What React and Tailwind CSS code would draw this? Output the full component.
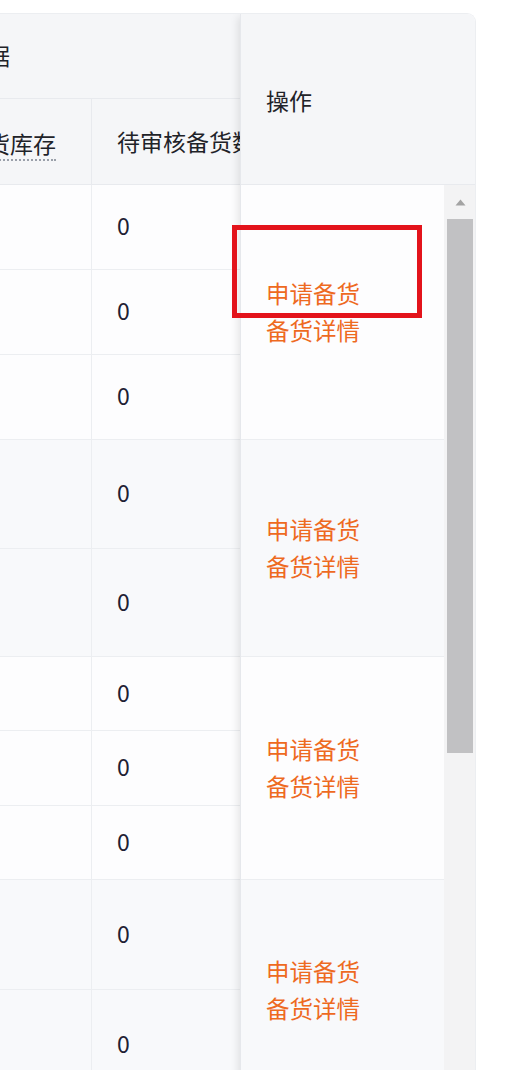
import React from "react";

const rows = [
  { h: 85, g: 0 }, { h: 85, g: 0 }, { h: 85, g: 0 },
  { h: 109, g: 1 }, { h: 108, g: 1 },
  { h: 74, g: 2 }, { h: 75, g: 2 }, { h: 74, g: 2 },
  { h: 110, g: 3 }, { h: 110, g: 3 },
];
const groups = [255, 217, 223, 220];

export default function App() {
  return (
    <div
      className="relative w-[532px] h-[1070px] overflow-hidden bg-white text-[#1f2329]"
      style={{ fontFamily: '"Noto Sans CJK SC", "Noto Sans", sans-serif' }}
    >
      <div className="pt-[13px]">
        <div className="flex w-[476px] rounded-tr-[9px] overflow-hidden border-t border-r border-[#eceef1]">
          {/* scrolled left area */}
          <div className="w-[240px] shrink-0 overflow-hidden">
            {/* header row 1 */}
            <div className="h-[85px] bg-[#f5f6f8] border-b border-[#e8eaee] flex items-center text-[23px] whitespace-nowrap">
              <span className="-ml-[36px] -mt-[2px]">数据</span>
            </div>
            {/* header row 2 */}
            <div className="h-[86px] bg-[#f5f6f8] border-b border-[#e8eaee] flex">
              <div className="w-[92px] shrink-0 border-r border-[#e8eaee] flex items-center overflow-hidden">
                <span className="-ml-[36px] text-[23px] leading-[26px] whitespace-nowrap border-b-2 border-dotted border-[#9aa0aa] pb-[3px] mt-[8px]">备货库存</span>
              </div>
              <div className="flex-1 flex items-center pl-[25px] text-[23px] whitespace-nowrap overflow-hidden">
                待审核备货数量
              </div>
            </div>
            {/* body */}
            {rows.map((r, i) => (
              <div
                key={i}
                className={`flex border-b border-[#eceef1] ${r.g % 2 === 1 ? "bg-[#f8f9fb]" : "bg-[#fdfdfe]"}`}
                style={{ height: r.h }}
              >
                <div className="w-[92px] shrink-0 border-r border-[#eceef1]" />
                <div className="flex-1 flex items-center pl-[25px] pb-[3px] text-[23px] text-[#1d2033]">0</div>
              </div>
            ))}
          </div>

          {/* fixed right column */}
          <div className="w-[236px] shrink-0 relative z-10 shadow-[-5px_0_8px_-3px_rgba(0,0,0,0.10)] border-l border-[#e6e8ec]">
            <div className="h-[171px] bg-[#f5f6f8] border-b border-[#e8eaee] flex items-center pl-[25px] pt-[3px] text-[23px]">
              操作
            </div>
            <div className="flex">
              <div className="w-[203px] shrink-0">
                {groups.map((h, i) => (
                  <div
                    key={i}
                    className={`flex flex-col justify-center pl-[25px] border-b border-[#eceef1] text-[23.5px] leading-[37px] text-[#ee6a1f] ${i % 2 === 1 ? "bg-[#f8f9fb]" : "bg-[#fdfdfe]"}`}
                    style={{ height: h }}
                  >
                    <span>申请备货</span>
                    <span>备货详情</span>
                  </div>
                ))}
              </div>
              {/* scrollbar */}
              <div className="flex-1 bg-[#f3f3f4] flex flex-col items-center">
                <div className="h-[34px] w-full flex items-center justify-center">
                  <svg width="11" height="7" viewBox="0 0 11 7">
                    <path d="M5.5 0.5 L10.5 6.5 L0.5 6.5 Z" fill="#a3a3a3" />
                  </svg>
                </div>
                <div className="w-[26px] h-[534px] bg-[#c1c1c3]" />
              </div>
            </div>
          </div>
        </div>
      </div>

      {/* red annotation box */}
      <div className="absolute z-30 left-[232px] top-[225px] w-[190px] h-[93px] border-[5px] border-[#e3131b]" />
    </div>
  );
}
